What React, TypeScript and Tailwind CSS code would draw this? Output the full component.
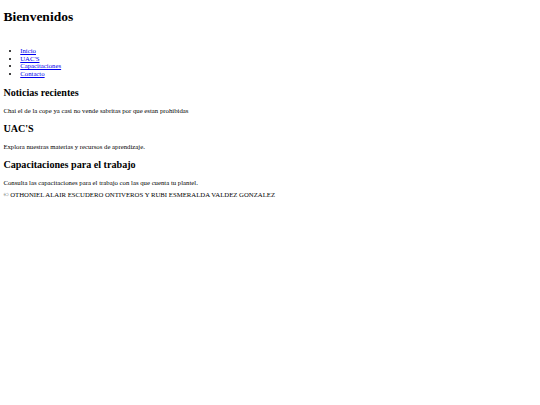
export default function App() {
  const links = ["Inicio", "UAC'S", "Capacitaciones", "Contacto"];

  const sections = [
    {
      title: "Noticias recientes",
      text: "Chai el de la cope ya casi no vende sabritas por que estan prohibidas",
    },
    {
      title: "UAC'S",
      text: "Explora nuestras materias y recursos de aprendizaje.",
    },
    {
      title: "Capacitaciones para el trabajo",
      text: "Consulta las capacitaciones para el trabajo con las que cuenta tu plantel.",
    },
  ];

  return (
    <div className="min-h-screen bg-white px-[3.375px] pt-px font-['Liberation_Serif','Times_New_Roman',serif] text-[6.75px] leading-[7.7px] text-black">
      <header>
        <h1 className="mt-[8.05px] mb-0 text-[13.5px] font-bold leading-[15.5px]">Bienvenidos</h1>
        <nav>
          <ul className="mt-[22.3px] mb-[8.9px] list-disc pl-[16.875px]">
            {links.map((l) => (
              <li key={l}>
                <a href="#" className="text-[#0000ee] underline">
                  {l}
                </a>
              </li>
            ))}
          </ul>
        </nav>
      </header>

      <main>
        {sections.map((s) => (
          <section key={s.title}>
            <h2 className="my-[8.4px] text-[10.125px] font-bold leading-[11.6px]">{s.title}</h2>
            <p className="my-[8.4px]">{s.text}</p>
          </section>
        ))}
      </main>

      <footer className="-mt-[3.7px]">
        <p>© OTHONIEL ALAIR ESCUDERO ONTIVEROS Y RUBI ESMERALDA VALDEZ GONZALEZ</p>
      </footer>
    </div>
  );
}
